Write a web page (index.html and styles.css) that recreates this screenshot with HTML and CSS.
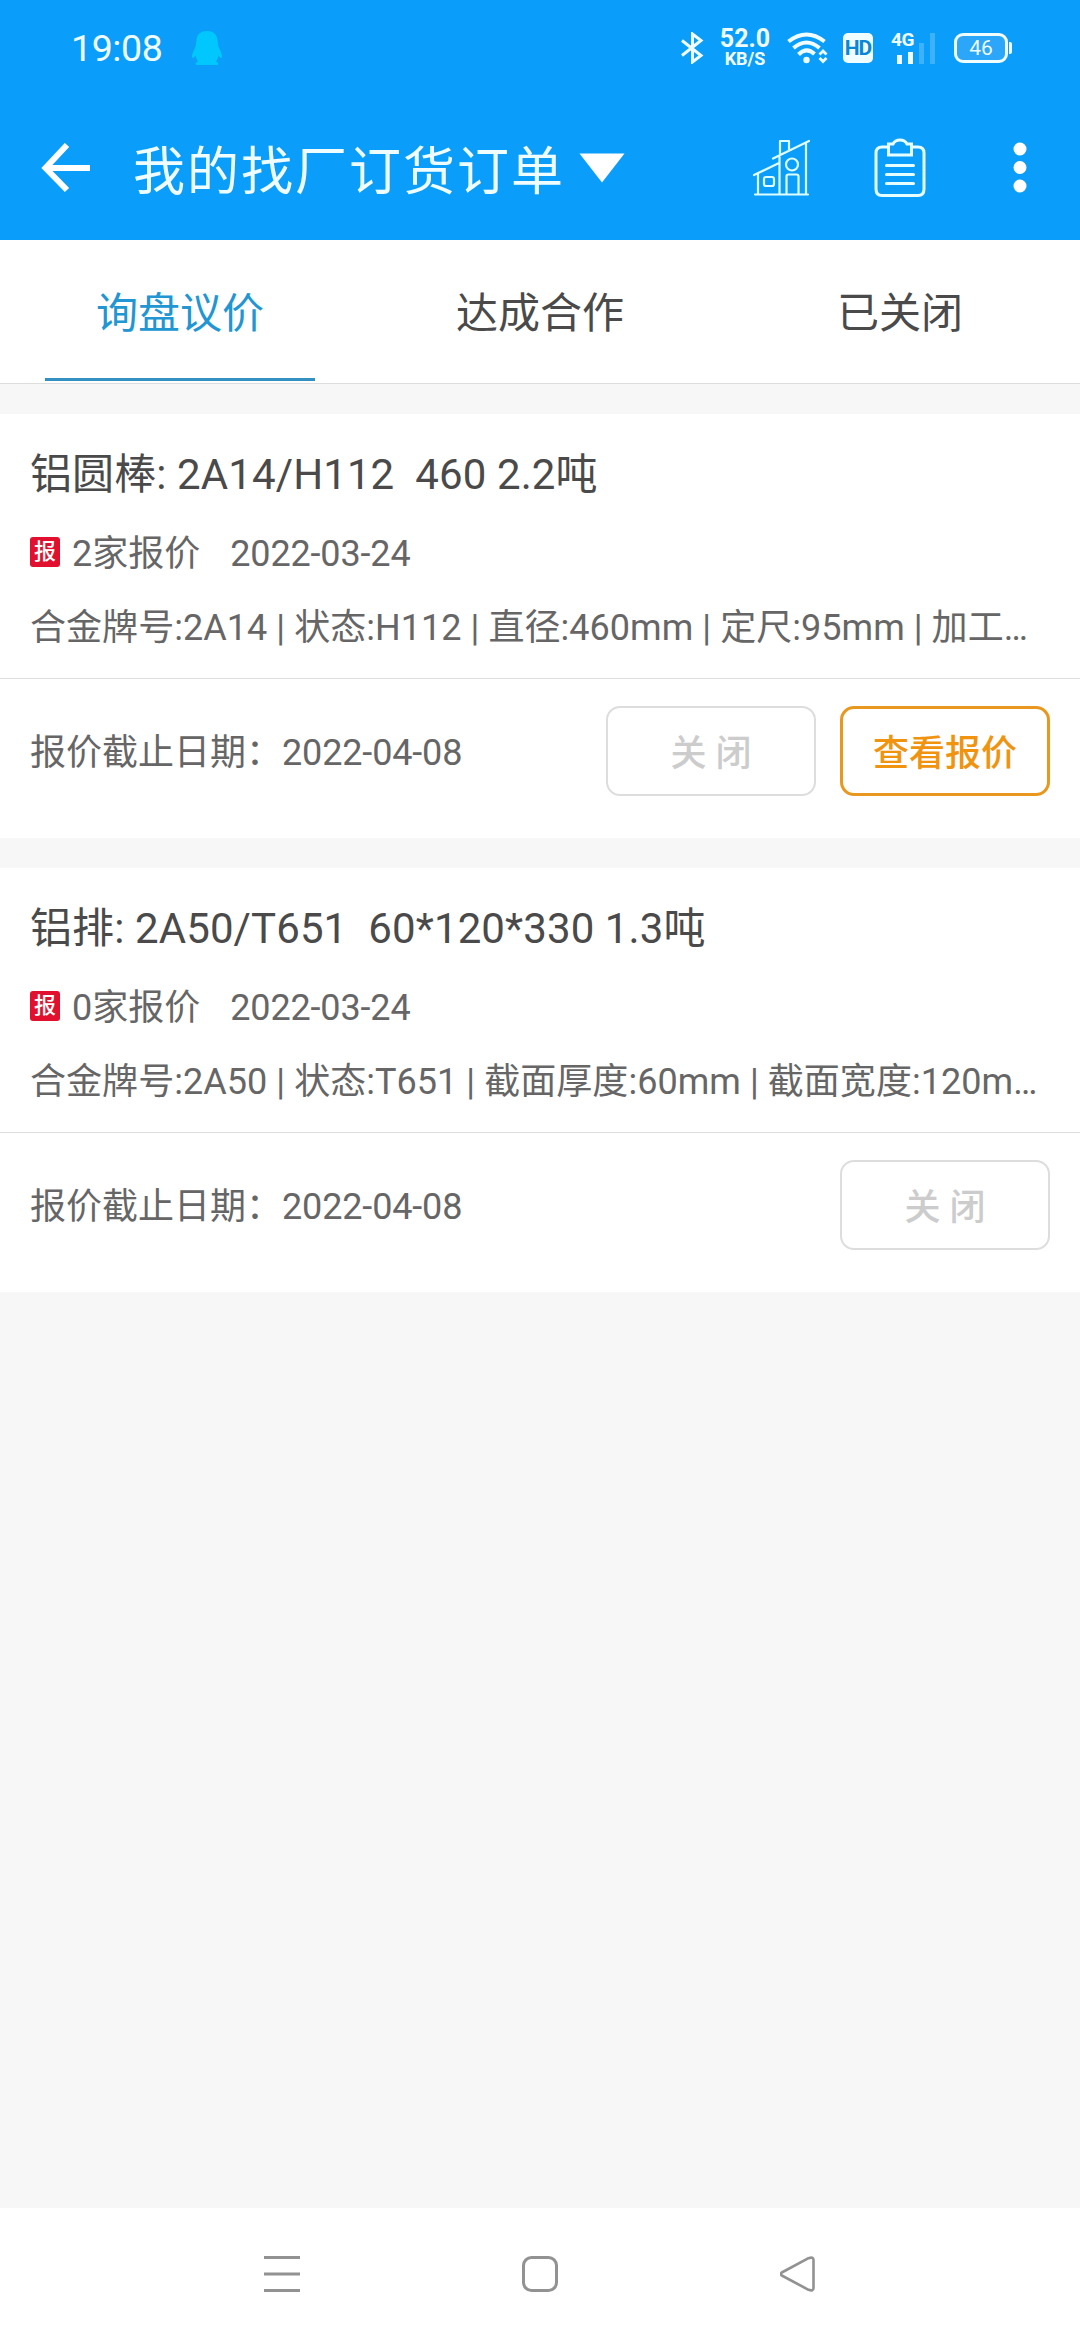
FILE: index.html
```html
<!DOCTYPE html>
<html lang="zh-CN">
<head>
<meta charset="utf-8">
<title>我的找厂订货订单</title>
<link rel="stylesheet" href="styles.css">
</head>
<body>
<div class="screen">
  <header class="top">
    <div class="status">
      <span class="clock">19:08</span>
      <svg class="penguin" width="32" height="36" viewBox="0 0 32 36"><path fill="#00c8ff" d="M16 1C22 1 26 4 26.500 10C27 14 27 16 28.500 19C31 24 32 28 30 28C29 28 28 26 27.500 25.500C27 28 26 30 25 31.500C28 32.500 28 34.500 26 35H6C4 34.500 4 32.500 7 31.500C6 30 5 28 4.500 25.500C4 26 3 28 2 28C0 28 1 24 3.500 19C5 16 5 14 5.500 10C6 4 10 1 16 1Z"/></svg>
      <div class="indicators">
        <svg class="bt" width="24" height="32" viewBox="0 0 24 32"><path d="M2 8.500L21 23.500L12.500 30V2L21 8.500L2 23.500" fill="none" stroke="#f0fdff" stroke-width="3"/></svg>
        <div class="speed"><span class="speed-n">52.0</span><span class="speed-u">KB/S</span></div>
        <svg class="wifi" width="42" height="32" viewBox="0 0 42 32"><g fill="none" stroke="#f0fdff" stroke-width="4"><path d="M1.500 9.500Q19.500-4.500 37.500 9.500"/><path d="M6.500 16Q19.500 5 32.500 16"/><path d="M11.500 22.500Q19.500 14.500 27.500 22"/><path d="M32.500 22.500l3.500-3.500 3.500 3.500M32.500 26l3.500 3.500 3.500-3.500" stroke-width="2.800"/></g><circle cx="19.500" cy="28" r="3.200" fill="#f0fdff"/></svg>
        <span class="hd">HD</span>
        <div class="cell"><span class="cell-g">4G</span><svg width="45" height="31" viewBox="0 0 45 31"><path fill="#f0fdff" d="M6 22h5v9h-5zM17 19h5v12h-5z"/><path fill="#3db2fb" d="M28 10h5v21h-5zM39 0h5v31h-5z"/></svg></div>
        <div class="battery"><span class="battery-body">46</span><i class="battery-tip"></i></div>
      </div>
    </div>
    <div class="bar">
      <svg class="back" width="50" height="50" viewBox="0 0 50 50"><path d="M26 2L4.500 25L26 47M5 25H49" fill="none" stroke="#fff" stroke-width="6"/></svg>
      <h1 class="heading">我的找厂订货订单</h1>
      <svg class="caret" width="46" height="30" viewBox="0 0 46 30"><path d="M.500.500h45L23 29.500z" fill="#fff"/></svg>
      <svg class="house" width="58" height="58" viewBox="0 0 58 58"><g fill="none" stroke="#dcffff" stroke-width="2.200" stroke-linejoin="round" stroke-linecap="round"><path d="M2 36L27 24M21 19.500L57 2M28 15V2h9v9M27.500 18V55.500M6 34.500V55.500M54 4V55.500M3 55.500H56"/><rect x="12" y="38" width="10" height="9" rx="2"/><circle cx="40" cy="25.500" r="6"/><path d="M34.500 55V37.500q0-2 2-2h8q2 0 2 2V55"/></g></svg>
      <svg class="clip" width="52" height="60" viewBox="0 0 52 60"><g fill="none" stroke="#e6ffff" stroke-width="3"><path d="M14.500 9H8Q2 9 2 15V51Q2 57.500 8 57.500H44Q50 57.500 50 51V15Q50 9 44 9H37.500"/><path d="M14.500 6H19Q21 2 26 2T33 6H37.500V17H14.500Z"/><path d="M12.500 27.500H39.500M12.500 36.500H39.500M12.500 45.500H39.500" stroke-linecap="round"/></g></svg>
      <svg class="more" width="14" height="52" viewBox="0 0 14 52"><g fill="#fff"><circle cx="7" cy="7" r="6.500"/><circle cx="7" cy="25.500" r="6.500"/><circle cx="7" cy="44" r="6.500"/></g></svg>
    </div>
  </header>

  <nav class="tabs">
    <a class="tab tab-on">询盘议价</a>
    <a class="tab">达成合作</a>
    <a class="tab">已关闭</a>
  </nav>

  <main class="list">
    <article class="card">
      <div class="info">
        <h2 class="name">铝圆棒: 2A14/H112&nbsp; 460 2.2吨</h2>
        <div class="quote"><span class="tag">报</span><p class="line"><span class="count">2家报价</span><span class="date">2022-03-24</span></p></div>
        <p class="spec">合金牌号:2A14 | 状态:H112 | 直径:460mm | 定尺:95mm | 加工…</p>
      </div>
      <div class="foot">
        <p class="line"><span class="due">报价截止日期：</span><span class="date">2022-04-08</span></p>
        <div class="acts"><button class="btn">关 闭</button><button class="btn btn-main">查看报价</button></div>
      </div>
    </article>
    <article class="card">
      <div class="info">
        <h2 class="name">铝排: 2A50/T651&nbsp; 60*120*330 1.3吨</h2>
        <div class="quote"><span class="tag">报</span><p class="line"><span class="count">0家报价</span><span class="date">2022-03-24</span></p></div>
        <p class="spec">合金牌号:2A50 | 状态:T651 | 截面厚度:60mm | 截面宽度:120m…</p>
      </div>
      <div class="foot">
        <p class="line"><span class="due">报价截止日期：</span><span class="date">2022-04-08</span></p>
        <div class="acts"><button class="btn">关 闭</button></div>
      </div>
    </article>
  </main>

  <footer class="sysnav">
    <svg width="36" height="36" viewBox="0 0 36 36"><path d="M0 1.500H36M0 18H36M0 34.500H36" stroke="#929292" stroke-width="3"/></svg>
    <svg width="36" height="36" viewBox="0 0 36 36"><rect x="1.500" y="1.500" width="33" height="33" rx="8" fill="none" stroke="#929292" stroke-width="3"/></svg>
    <svg width="36" height="36" viewBox="0 0 36 36"><path d="M1.800 16.500L28.500 2.200Q33.500.500 33.500 4V32Q33.500 35.500 28.500 33.800L1.800 19.500Q0 18 1.800 16.500Z" fill="none" stroke="#929292" stroke-width="2.600" stroke-linejoin="round"/></svg>
  </footer>
</div>
</body>
</html>
```

FILE: styles.css
```css
* { box-sizing: border-box; margin: 0; padding: 0; }
body { font-family: Roboto, "Noto Sans CJK SC", sans-serif; color: #666; background: #f7f7f7; }
svg { display: block; flex: none; }
.screen { display: flex; flex-direction: column; width: 1080px; height: 2340px; }

.top { height: 240px; background: #0a9df9; color: #f0fdff; }
.status { display: flex; align-items: center; height: 96px; padding: 0 68px 0 71px; }
.clock { width: 120px; font-size: 37.5px; line-height: 96px; letter-spacing: -.4px; }
.indicators { display: flex; align-items: center; margin-left: auto; }
.speed { display: flex; flex-direction: column; align-items: center; width: 54px; margin: 0 15px 0 14px; font-weight: 700; }
.speed-n { font-size: 25px; line-height: 20px; }
.speed-u { font-size: 18px; line-height: 19px; }
.hd { width: 30px; height: 30px; margin: 0 18px 0 14px; border-radius: 5px; background: #f0fdff; color: #0a86d6; font-size: 21px; font-weight: 700; line-height: 31px; text-align: center; letter-spacing: -1px; }
.cell { position: relative; margin-right: 18px; }
.cell-g { position: absolute; left: 0; top: -3px; font-size: 19px; line-height: 20px; font-weight: 700; letter-spacing: -.5px; }
.battery { display: flex; align-items: center; gap: 1px; }
.battery-body { width: 54px; height: 30px; border: 3px solid #f0fdff; border-radius: 9px; background: #2ba6f9; font-size: 21px; line-height: 25px; text-align: center; }
.battery-tip { width: 3px; height: 12px; border-radius: 0 2px 2px 0; background: #f0fdff; }

.bar { display: flex; align-items: center; height: 144px; padding: 0 53px 0 41px; }
.heading { margin-left: 42px; padding-top: 9px; font-size: 52px; font-weight: 400; line-height: 135px; letter-spacing: 2px; }
.caret { margin-left: 14px; }
.house { margin-left: auto; }
.clip { margin-left: 64px; }
.more { margin-left: 87px; }

.tabs { display: flex; height: 144px; background: #fff; border-bottom: 1px solid #ddd; }
.tab { position: relative; flex: 1; padding-top: 4px; font-size: 42px; line-height: 139px; text-align: center; color: #4a4a4a; }
.tab-on { color: #2196d3; }
.tab-on::after { content: ""; position: absolute; left: 45px; right: 45px; bottom: 2px; height: 3px; background: #3490c0; }

.list { display: flex; flex-direction: column; flex: 1; gap: 30px; padding-top: 30px; }
.card { height: 424px; background: #fff; font-size: 36px; }
.info { height: 265px; padding: 26px 30px 0; border-bottom: 1px solid #ddd; }
.name { font-size: 42px; font-weight: 400; line-height: 70px; letter-spacing: .1px; color: #4a4a4a; white-space: nowrap; }
.quote { display: flex; align-items: center; height: 50px; margin-top: 17px; }
.tag { width: 30px; height: 30px; margin-right: 12px; border-radius: 3px; background: #e0102e; color: #fff; font-size: 22px; font-weight: 500; line-height: 30px; text-align: center; }
.line { display: flex; align-items: baseline; padding-top: 4px; line-height: 50px; }
.count { margin-right: 30px; }
.date { letter-spacing: -.15px; }
.spec { margin-top: 24px; line-height: 54px; letter-spacing: .05px; white-space: nowrap; }
.foot { display: flex; align-items: center; height: 144px; padding: 0 30px; }
.due { width: 252px; }
.acts { display: flex; gap: 24px; margin-left: auto; }
.btn { width: 210px; height: 90px; padding-bottom: 2px; border: 2px solid #ddd; border-radius: 14px; background: #fff; color: #ccc; font: 500 36px Roboto, "Noto Sans CJK SC", sans-serif; }
.btn-main { border: 3px solid #e8981f; color: #f0930f; }

.sysnav { display: flex; justify-content: center; align-items: center; gap: 222px; height: 132px; background: #fff; }
```
